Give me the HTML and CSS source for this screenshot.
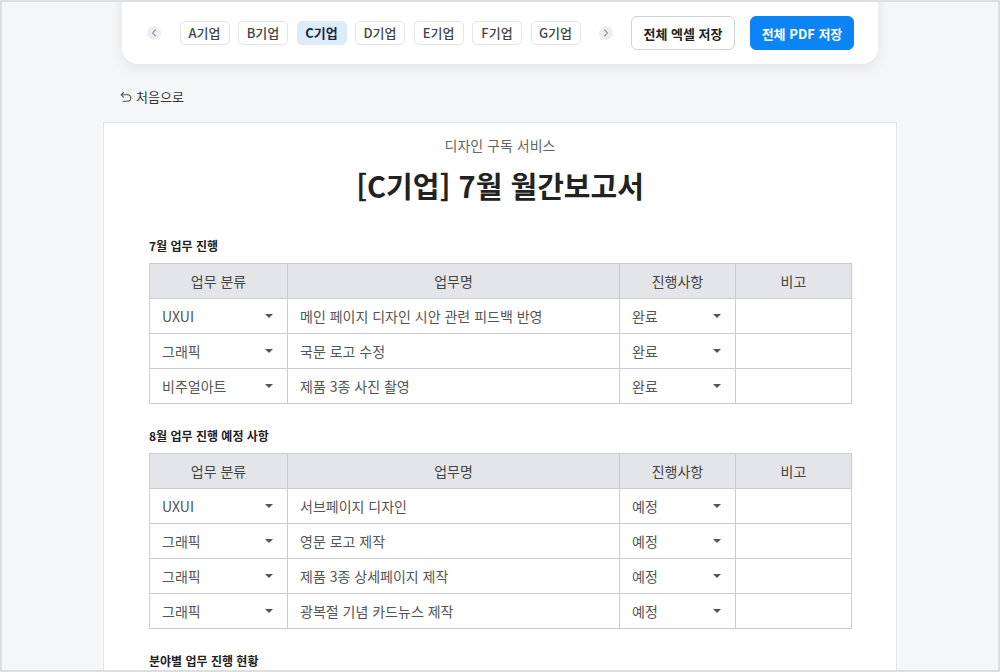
FILE: index.html
```html
<!DOCTYPE html>
<html lang="ko">
<head>
   <meta charset="UTF-8">
   <meta name="viewport" content="width=device-width, initial-scale=1.0">
   <title>월간보고서</title>
   <link rel="stylesheet" href="styles.css">
</head>
<body>
<div class="frame">
   <div class="toolbar">
      <div class="company_tabs">
         <span class="arrow_btn">
            <svg width="6" height="8" viewBox="0 0 6 8"><path d="M4.5 1 L1.5 4 L4.5 7" fill="none" stroke="#9aa0a8" stroke-width="1.3" stroke-linecap="round" stroke-linejoin="round"/></svg>
         </span>
         <span class="chip">A기업</span>
         <span class="chip">B기업</span>
         <span class="chip active">C기업</span>
         <span class="chip">D기업</span>
         <span class="chip">E기업</span>
         <span class="chip">F기업</span>
         <span class="chip">G기업</span>
         <span class="arrow_btn">
            <svg width="6" height="8" viewBox="0 0 6 8"><path d="M1.5 1 L4.5 4 L1.5 7" fill="none" stroke="#9aa0a8" stroke-width="1.3" stroke-linecap="round" stroke-linejoin="round"/></svg>
         </span>
      </div>
      <button class="btn_excel">전체 엑셀 저장</button>
      <button class="btn_pdf">전체 PDF 저장</button>
   </div>

   <div class="back_row">
      <a class="back_link" href="#">
         <svg width="12" height="12" viewBox="0 0 12 12"><path d="M3.5 1.5 L1.2 3.8 L3.5 6.1 M1.4 3.8 H7.5 A3.2 3.2 0 0 1 7.5 10.2 H3" fill="none" stroke="#555" stroke-width="1.1" stroke-linecap="round" stroke-linejoin="round"/></svg>
         처음으로
      </a>
   </div>

   <div class="paper">
      <p class="sub_title">디자인 구독 서비스</p>
      <h1 class="report_title">[C기업] 7월 월간보고서</h1>

      <h3 class="section_title first">7월 업무 진행</h3>
      <table class="work_table">
         <colgroup><col class="c1"><col class="c2"><col class="c3"><col class="c4"></colgroup>
         <tr><th>업무 분류</th><th>업무명</th><th>진행사항</th><th>비고</th></tr>
         <tr><td><span class="sel">UXUI<i class="caret"></i></span></td><td>메인 페이지 디자인 시안 관련 피드백 반영</td><td><span class="sel">완료<i class="caret"></i></span></td><td></td></tr>
         <tr><td><span class="sel">그래픽<i class="caret"></i></span></td><td>국문 로고 수정</td><td><span class="sel">완료<i class="caret"></i></span></td><td></td></tr>
         <tr><td><span class="sel">비주얼아트<i class="caret"></i></span></td><td>제품 3종 사진 촬영</td><td><span class="sel">완료<i class="caret"></i></span></td><td></td></tr>
      </table>

      <h3 class="section_title">8월 업무 진행 예정 사항</h3>
      <table class="work_table">
         <colgroup><col class="c1"><col class="c2"><col class="c3"><col class="c4"></colgroup>
         <tr><th>업무 분류</th><th>업무명</th><th>진행사항</th><th>비고</th></tr>
         <tr><td><span class="sel">UXUI<i class="caret"></i></span></td><td>서브페이지 디자인</td><td><span class="sel">예정<i class="caret"></i></span></td><td></td></tr>
         <tr><td><span class="sel">그래픽<i class="caret"></i></span></td><td>영문 로고 제작</td><td><span class="sel">예정<i class="caret"></i></span></td><td></td></tr>
         <tr><td><span class="sel">그래픽<i class="caret"></i></span></td><td>제품 3종 상세페이지 제작</td><td><span class="sel">예정<i class="caret"></i></span></td><td></td></tr>
         <tr><td><span class="sel">그래픽<i class="caret"></i></span></td><td>광복절 기념 카드뉴스 제작</td><td><span class="sel">예정<i class="caret"></i></span></td><td></td></tr>
      </table>

      <h3 class="section_title">분야별 업무 진행 현황</h3>
   </div>
</div>
</body>
</html>
```

FILE: styles.css
```css
html, body{
    margin: 0;
    padding: 0;
}
body{
    font-family: "Noto Sans CJK KR", "Noto Sans", sans-serif;
    color: #222;
}
.frame{
    width: 1000px;
    height: 672px;
    box-sizing: border-box;
    border: 2px solid #dcdee2;
    background: #f5f6f8;
    overflow: hidden;
}

/* top toolbar */
.toolbar{
    width: 756px;
    box-sizing: border-box;
    margin: -20px auto 0;
    padding: 34px 23px 14px 25px;
    background: #fff;
    border-radius: 0 0 16px 16px;
    box-shadow: 0 4px 14px rgba(0, 0, 0, 0.08);
    display: flex;
    align-items: center;
}
.company_tabs{
    display: flex;
    align-items: center;
    gap: 8.5px;
}
.arrow_btn{
    flex-shrink: 0;
    width: 14px;
    height: 14px;
    border-radius: 50%;
    background: #eceef1;
    display: flex;
    align-items: center;
    justify-content: center;
}
.arrow_btn:first-child{ margin-right: 10px; }
.arrow_btn:last-child{ margin-left: 10px; }
.chip{
    flex-shrink: 0;
    white-space: nowrap;
    box-sizing: border-box;
    width: 50px;
    height: 24px;
    border: 1px solid #e3e5e8;
    border-radius: 5px;
    font-size: 13px;
    font-weight: 500;
    line-height: 22px;
    text-align: center;
    color: #444;
}
.chip.active{
    background: #deebfb;
    border-color: #deebfb;
    color: #1b2a44;
    font-weight: 600;
}
.btn_excel, .btn_pdf{
    flex-shrink: 0;
    white-space: nowrap;
    font-family: inherit;
    height: 34px;
    width: 104px;
    padding: 0;
    border-radius: 6px;
    font-size: 13px;
    font-weight: 700;
    cursor: pointer;
}
.btn_excel{
    margin-left: 18px;
    background: #fff;
    border: 1px solid #cfd2d6;
    color: #222;
}
.btn_pdf{
    margin-left: 15px;
    background: #0b84f6;
    border: 1px solid #0b84f6;
    color: #fff;
}

/* back link */
.back_row{
    width: 794px;
    margin: 0 auto;
    padding: 20px 0 0 17px;
    box-sizing: border-box;
    height: 58px;
}
.back_link{
    display: inline-flex;
    align-items: center;
    gap: 4px;
    font-size: 13px;
    line-height: 18px;
    color: #333;
    text-decoration: none;
}

/* report paper */
.paper{
    width: 794px;
    margin: 0 auto;
    box-sizing: border-box;
    background: #fff;
    border: 1px solid #e3e5e8;
    padding: 12px 45px 40px;
}
.sub_title{
    margin: 0;
    text-align: center;
    font-size: 14px;
    line-height: 20px;
    color: #666;
}
.report_title{
    margin: 10px 0 0;
    text-align: center;
    font-size: 29px;
    line-height: 40px;
    font-weight: 700;
    color: #222;
}
.section_title{
    margin: 23px 0 8px;
    font-size: 12px;
    line-height: 18px;
    font-weight: 700;
    color: #222;
}
.section_title.first{
    margin-top: 32px;
}
.work_table{
    width: 702px;
    border-collapse: collapse;
    table-layout: fixed;
}
.c1{ width: 138px; }
.c2{ width: 332px; }
.c3{ width: 116px; }
.c4{ width: 116px; }
.work_table th, .work_table td{
    border: 1px solid #c9ccd1;
    height: 34px;
    padding: 0 12px;
    font-size: 14px;
    color: #555;
    font-weight: 400;
    text-align: left;
}
.work_table th{
    background: #e3e5e9;
    text-align: center;
    color: #444;
}
.sel{
    display: flex;
    align-items: center;
    justify-content: space-between;
    padding-right: 2px;
}
.caret{
    width: 0;
    height: 0;
    border-left: 4px solid transparent;
    border-right: 4px solid transparent;
    border-top: 4px solid #555;
}
```
